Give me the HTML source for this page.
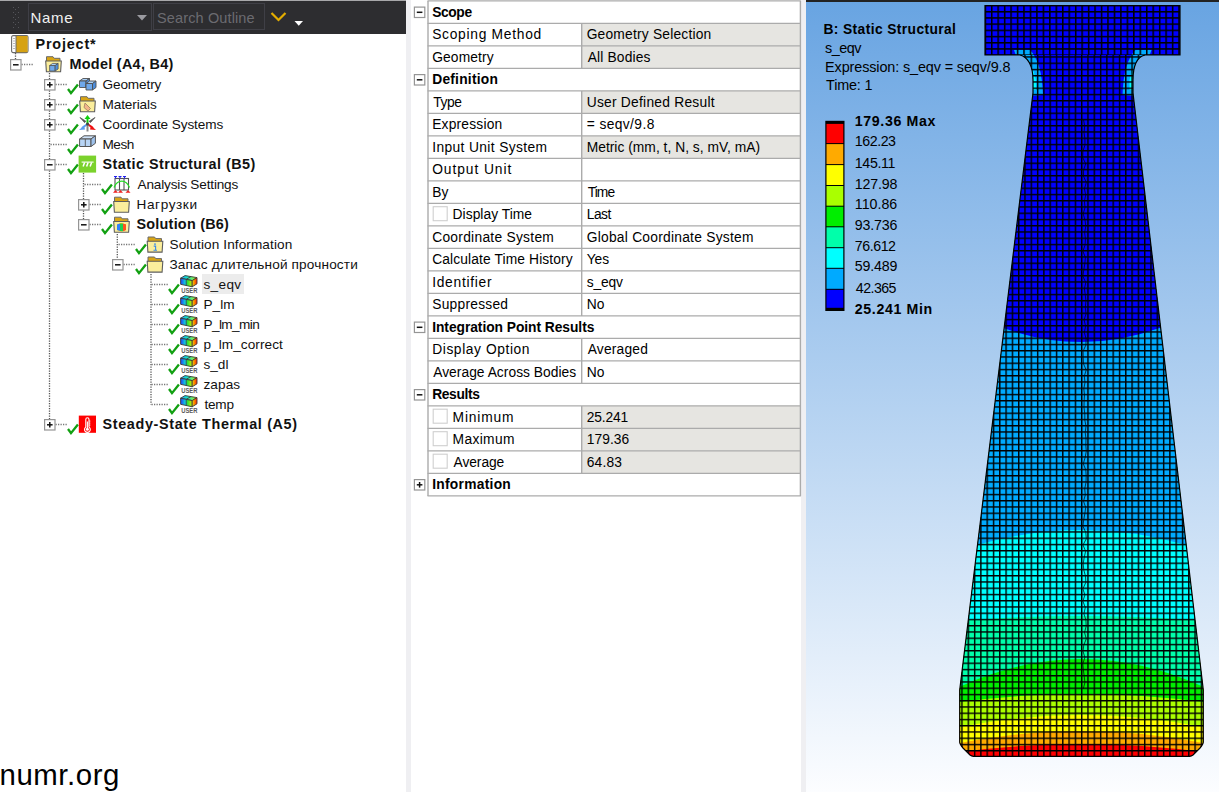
<!DOCTYPE html><html><head><meta charset="utf-8"><style>
*{margin:0;padding:0;box-sizing:border-box}
html,body{width:1219px;height:792px;overflow:hidden;background:#fff;font-family:"Liberation Sans",sans-serif}
body{position:relative}
.a{position:absolute}
.t{position:absolute;white-space:nowrap;line-height:50px}
svg{overflow:visible}
</style></head><body>
<div class="a" style="left:0;top:0;width:406px;height:1px;background:#a8a8aa"></div>
<div class="a" style="left:0;top:1px;width:406px;height:33px;background:#2d2d30"></div>
<svg class="a" style="left:0;top:0" width="30" height="34"><rect x="13" y="7" width="1" height="1" fill="#55555a"/><rect x="18" y="7" width="1" height="1" fill="#55555a"/><rect x="15" y="9" width="1" height="1" fill="#55555a"/><rect x="13" y="12" width="1" height="1" fill="#55555a"/><rect x="18" y="12" width="1" height="1" fill="#55555a"/><rect x="15" y="14" width="1" height="1" fill="#55555a"/><rect x="13" y="17" width="1" height="1" fill="#55555a"/><rect x="18" y="17" width="1" height="1" fill="#55555a"/><rect x="15" y="19" width="1" height="1" fill="#55555a"/><rect x="13" y="22" width="1" height="1" fill="#55555a"/><rect x="18" y="22" width="1" height="1" fill="#55555a"/><rect x="15" y="24" width="1" height="1" fill="#55555a"/><rect x="13" y="27" width="1" height="1" fill="#55555a"/><rect x="18" y="27" width="1" height="1" fill="#55555a"/></svg>
<div class="a" style="left:28px;top:3px;width:124px;height:28px;border:1px solid #3f3f46;background:#2d2d30"></div>
<div class="a" style="left:153px;top:3px;width:112px;height:27px;border:1px solid #3f3f46;background:#2d2d30"></div>
<svg class="a" style="left:137px;top:15px" width="11" height="7"><path d="M0 0H10L5 5.5Z" fill="#9a9aa0"/></svg>
<svg class="a" style="left:270px;top:11px" width="18" height="12"><path d="M1.5 2L8.5 9L15.5 2" fill="none" stroke="#e3ad00" stroke-width="2.2"/></svg>
<svg class="a" style="left:294px;top:20px" width="10" height="7"><path d="M0.5 1H9L4.75 5.8Z" fill="#fff"/></svg>
<div class="a" style="left:406px;top:0;width:5px;height:792px;background:#efeff2"></div>
<div class="a" style="left:801px;top:0;width:5px;height:792px;background:#efeff2"></div>
<div class="a" style="left:202px;top:274px;width:42px;height:20px;background:#ececec"></div>
<svg class="a" style="left:0;top:0" width="406" height="450"><defs><linearGradient id="uf" x1="0" x2="1" y1="0" y2="0"><stop offset="0" stop-color="#1e3ef0"/><stop offset="0.45" stop-color="#10e0e0"/><stop offset="0.6" stop-color="#30e030"/><stop offset="1" stop-color="#d8f000"/></linearGradient><linearGradient id="us" x1="0" x2="1" y1="0" y2="0"><stop offset="0" stop-color="#f0e000"/><stop offset="1" stop-color="#ff2000"/></linearGradient><linearGradient id="ut" x1="0" x2="1" y1="0" y2="0"><stop offset="0" stop-color="#2090f0"/><stop offset="0.4" stop-color="#10e8d0"/><stop offset="1" stop-color="#c0f000"/></linearGradient></defs><path d="M15.5 53V59" stroke="#555" stroke-width="1.3" stroke-dasharray="1.25 1.25"/><path d="M49.5 73V419" stroke="#555" stroke-width="1.3" stroke-dasharray="1.25 1.25"/><path d="M83.5 173V219" stroke="#555" stroke-width="1.3" stroke-dasharray="1.25 1.25"/><path d="M117.3 234V259" stroke="#555" stroke-width="1.3" stroke-dasharray="1.25 1.25"/><path d="M151 274V404.5" stroke="#555" stroke-width="1.3" stroke-dasharray="1.25 1.25"/><path d="M21.5 64.5H34" stroke="#777" stroke-width="1.3" stroke-dasharray="1.25 1.25"/><path d="M55.5 84.5H68" stroke="#777" stroke-width="1.3" stroke-dasharray="1.25 1.25"/><path d="M55.5 104.5H68" stroke="#777" stroke-width="1.3" stroke-dasharray="1.25 1.25"/><path d="M55.5 124.5H68" stroke="#777" stroke-width="1.3" stroke-dasharray="1.25 1.25"/><path d="M50.5 144.5H68" stroke="#777" stroke-width="1.3" stroke-dasharray="1.25 1.25"/><path d="M55.5 164.5H68" stroke="#777" stroke-width="1.3" stroke-dasharray="1.25 1.25"/><path d="M84.5 184.5H102" stroke="#777" stroke-width="1.3" stroke-dasharray="1.25 1.25"/><path d="M89.5 204.5H102" stroke="#777" stroke-width="1.3" stroke-dasharray="1.25 1.25"/><path d="M89.5 224.5H102" stroke="#777" stroke-width="1.3" stroke-dasharray="1.25 1.25"/><path d="M118.5 244.5H136" stroke="#777" stroke-width="1.3" stroke-dasharray="1.25 1.25"/><path d="M123.5 264.5H136" stroke="#777" stroke-width="1.3" stroke-dasharray="1.25 1.25"/><path d="M151.5 284.5H169" stroke="#777" stroke-width="1.3" stroke-dasharray="1.25 1.25"/><path d="M151.5 304.5H169" stroke="#777" stroke-width="1.3" stroke-dasharray="1.25 1.25"/><path d="M151.5 324.5H169" stroke="#777" stroke-width="1.3" stroke-dasharray="1.25 1.25"/><path d="M151.5 344.5H169" stroke="#777" stroke-width="1.3" stroke-dasharray="1.25 1.25"/><path d="M151.5 364.5H169" stroke="#777" stroke-width="1.3" stroke-dasharray="1.25 1.25"/><path d="M151.5 384.5H169" stroke="#777" stroke-width="1.3" stroke-dasharray="1.25 1.25"/><path d="M151.5 404.5H169" stroke="#777" stroke-width="1.3" stroke-dasharray="1.25 1.25"/><path d="M55.5 424.5H68" stroke="#777" stroke-width="1.3" stroke-dasharray="1.25 1.25"/><rect x="10.6" y="59.6" width="10.4" height="10.4" fill="#fff" stroke="#959595" stroke-width="1.2"/><path d="M13 64.8H18.6" stroke="#111" stroke-width="1.5"/><rect x="44.6" y="79.6" width="10.4" height="10.4" fill="#fff" stroke="#959595" stroke-width="1.2"/><path d="M47 84.8H52.6" stroke="#111" stroke-width="1.5"/><path d="M49.8 82V87.6" stroke="#111" stroke-width="1.5"/><path d="M68.0 89 L71.0 93.2 L77.9 84.5" fill="none" stroke="#12a012" stroke-width="2.3" stroke-linejoin="miter" stroke-linecap="butt"/><rect x="44.6" y="99.6" width="10.4" height="10.4" fill="#fff" stroke="#959595" stroke-width="1.2"/><path d="M47 104.8H52.6" stroke="#111" stroke-width="1.5"/><path d="M49.8 102V107.6" stroke="#111" stroke-width="1.5"/><path d="M68.0 109 L71.0 113.2 L77.9 104.5" fill="none" stroke="#12a012" stroke-width="2.3" stroke-linejoin="miter" stroke-linecap="butt"/><rect x="44.6" y="119.6" width="10.4" height="10.4" fill="#fff" stroke="#959595" stroke-width="1.2"/><path d="M47 124.8H52.6" stroke="#111" stroke-width="1.5"/><path d="M49.8 122V127.6" stroke="#111" stroke-width="1.5"/><path d="M68.0 129 L71.0 133.2 L77.9 124.5" fill="none" stroke="#12a012" stroke-width="2.3" stroke-linejoin="miter" stroke-linecap="butt"/><path d="M68.0 149 L71.0 153.2 L77.9 144.5" fill="none" stroke="#12a012" stroke-width="2.3" stroke-linejoin="miter" stroke-linecap="butt"/><rect x="44.6" y="159.6" width="10.4" height="10.4" fill="#fff" stroke="#959595" stroke-width="1.2"/><path d="M47 164.8H52.6" stroke="#111" stroke-width="1.5"/><path d="M68.0 169 L71.0 173.2 L77.9 164.5" fill="none" stroke="#12a012" stroke-width="2.3" stroke-linejoin="miter" stroke-linecap="butt"/><path d="M102.0 189 L105.0 193.2 L111.9 184.5" fill="none" stroke="#12a012" stroke-width="2.3" stroke-linejoin="miter" stroke-linecap="butt"/><rect x="78.6" y="199.6" width="10.4" height="10.4" fill="#fff" stroke="#959595" stroke-width="1.2"/><path d="M81 204.8H86.6" stroke="#111" stroke-width="1.5"/><path d="M83.8 202V207.6" stroke="#111" stroke-width="1.5"/><path d="M102.0 209 L105.0 213.2 L111.9 204.5" fill="none" stroke="#12a012" stroke-width="2.3" stroke-linejoin="miter" stroke-linecap="butt"/><rect x="78.6" y="219.6" width="10.4" height="10.4" fill="#fff" stroke="#959595" stroke-width="1.2"/><path d="M81 224.8H86.6" stroke="#111" stroke-width="1.5"/><path d="M102.0 229 L105.0 233.2 L111.9 224.5" fill="none" stroke="#12a012" stroke-width="2.3" stroke-linejoin="miter" stroke-linecap="butt"/><path d="M136.0 249 L139.0 253.2 L145.89999999999998 244.5" fill="none" stroke="#12a012" stroke-width="2.3" stroke-linejoin="miter" stroke-linecap="butt"/><rect x="112.6" y="259.6" width="10.4" height="10.4" fill="#fff" stroke="#959595" stroke-width="1.2"/><path d="M115 264.8H120.6" stroke="#111" stroke-width="1.5"/><path d="M136.0 269 L139.0 273.2 L145.89999999999998 264.5" fill="none" stroke="#12a012" stroke-width="2.3" stroke-linejoin="miter" stroke-linecap="butt"/><path d="M169.0 289 L172.0 293.2 L178.89999999999998 284.5" fill="none" stroke="#12a012" stroke-width="2.3" stroke-linejoin="miter" stroke-linecap="butt"/><path d="M169.0 309 L172.0 313.2 L178.89999999999998 304.5" fill="none" stroke="#12a012" stroke-width="2.3" stroke-linejoin="miter" stroke-linecap="butt"/><path d="M169.0 329 L172.0 333.2 L178.89999999999998 324.5" fill="none" stroke="#12a012" stroke-width="2.3" stroke-linejoin="miter" stroke-linecap="butt"/><path d="M169.0 349 L172.0 353.2 L178.89999999999998 344.5" fill="none" stroke="#12a012" stroke-width="2.3" stroke-linejoin="miter" stroke-linecap="butt"/><path d="M169.0 369 L172.0 373.2 L178.89999999999998 364.5" fill="none" stroke="#12a012" stroke-width="2.3" stroke-linejoin="miter" stroke-linecap="butt"/><path d="M169.0 389 L172.0 393.2 L178.89999999999998 384.5" fill="none" stroke="#12a012" stroke-width="2.3" stroke-linejoin="miter" stroke-linecap="butt"/><path d="M169.0 409 L172.0 413.2 L178.89999999999998 404.5" fill="none" stroke="#12a012" stroke-width="2.3" stroke-linejoin="miter" stroke-linecap="butt"/><rect x="44.6" y="419.6" width="10.4" height="10.4" fill="#fff" stroke="#959595" stroke-width="1.2"/><path d="M47 424.8H52.6" stroke="#111" stroke-width="1.5"/><path d="M49.8 422V427.6" stroke="#111" stroke-width="1.5"/><path d="M68.0 429 L71.0 433.2 L77.9 424.5" fill="none" stroke="#12a012" stroke-width="2.3" stroke-linejoin="miter" stroke-linecap="butt"/><g transform="translate(11,35)"><rect x="0.6" y="0.6" width="16.4" height="17" rx="1.5" fill="#fff" stroke="#6a6a6a" stroke-width="1.1"/><rect x="5" y="1" width="11.6" height="16.2" fill="#d6a213"/><path d="M5 1V17.5" stroke="#6a6a6a" stroke-width="1"/><path d="M2 3.5h2M2 6h2M2 8.5h2M2 11h2M2 13.5h2" stroke="#b0b0b0" stroke-width="0.9"/></g><g transform="translate(45,55.5)"><path d="M1.5 1.2H8L9.2 2.8H15V7H1.5Z" fill="#d9a514" stroke="#6a6a6a" stroke-width="1"/><path d="M0.7 5.5H16.3L15.6 16.3H1.4Z" fill="#fbee9c" stroke="#5e5e5e" stroke-width="1.1"/><g transform="translate(4.2,7.5) scale(0.85)"><path d="M0.5 3L4 0.5H10.5L7 3Z" fill="#a9d0f7" stroke="#505050" stroke-width="0.9"/><path d="M0.5 3H7V9.5H0.5Z" fill="#6fa8ea" stroke="#505050" stroke-width="0.9"/><path d="M7 3L10.5 0.5V7L7 9.5Z" fill="#4d8edc" stroke="#505050" stroke-width="0.9"/></g></g><g transform="translate(79,78) scale(1.0)"><path d="M0.5 3L4 0.5H10.5L7 3Z" fill="#a9d0f7" stroke="#505050" stroke-width="0.9"/><path d="M0.5 3H7V9.5H0.5Z" fill="#6fa8ea" stroke="#505050" stroke-width="0.9"/><path d="M7 3L10.5 0.5V7L7 9.5Z" fill="#4d8edc" stroke="#505050" stroke-width="0.9"/></g><g transform="translate(85.5,80.5) scale(1.0)"><path d="M0.5 3L4 0.5H10.5L7 3Z" fill="#a9d0f7" stroke="#505050" stroke-width="0.9"/><path d="M0.5 3H7V9.5H0.5Z" fill="#6fa8ea" stroke="#505050" stroke-width="0.9"/><path d="M7 3L10.5 0.5V7L7 9.5Z" fill="#4d8edc" stroke="#505050" stroke-width="0.9"/></g><g transform="translate(79,95.5)"><path d="M1.5 1.2H8L9.2 2.8H15V7H1.5Z" fill="#d9a514" stroke="#6a6a6a" stroke-width="1"/><path d="M0.7 5.5H16.3L15.6 16.3H1.4Z" fill="#fbee9c" stroke="#5e5e5e" stroke-width="1.1"/><path d="M6 7.5L11.5 13L9 15.5L5 12Z" fill="#f2b48a" stroke="#9a8060" stroke-width="0.8"/></g><g transform="translate(79,115)"><path d="M8.5 9V3" stroke="#10d010" stroke-width="2"/><path d="M5.5 4L8.5 0L11.5 4Z" fill="#10d010"/><path d="M8.5 9L14 13" stroke="#ee1010" stroke-width="2"/><path d="M12 10.5L17 15L11 14.5Z" fill="#ee1010"/><path d="M8.5 9L3 13" stroke="#5a9af0" stroke-width="2"/><path d="M5 10.5L0 15L6 14.5Z" fill="#5a9af0"/><path d="M1 2.5L6.8 6.2L5.6 7.6Z M16 2.5L10.2 6.2L11.4 7.6Z" fill="#555" stroke="#555" stroke-width="0.8"/><path d="M8.5 9V16.5" stroke="#888" stroke-width="2"/><circle cx="8.5" cy="9" r="1.5" fill="#444"/></g><g transform="translate(79,135)"><path d="M0.6 4L5 0.8H16.4L12 4Z" fill="#cfe3fa" stroke="#555" stroke-width="1"/><path d="M0.6 4H12V11.5H0.6Z" fill="#b7d4f5" stroke="#555" stroke-width="1"/><path d="M12 4L16.4 0.8V8.3L12 11.5Z" fill="#9fc2ec" stroke="#555" stroke-width="1"/><path d="M6.3 4V11.5M10.7 2.4L10.7 2.4" stroke="#555" stroke-width="0.9"/></g><g transform="translate(78.6,155.6)"><rect width="17.5" height="17" fill="#7bd22c"/><path d="M3 6.5H15" stroke="#fff" stroke-width="1.1"/><path d="M6 7L4.5 11M9.5 7L8 11M13 7L11.5 11" stroke="#fff" stroke-width="1.5"/></g><g transform="translate(112.5,175.5)"><rect x="2.5" y="3" width="13.5" height="11.5" fill="none" stroke="#555" stroke-width="1.1"/><path d="M7 3V14.5M11.5 3V14.5" stroke="#555" stroke-width="1.1"/><path d="M1.5 12C5 3.5 13.5 3.5 17 12" fill="none" stroke="#22dd22" stroke-width="1.3"/><path d="M1.5 1H4.5M6 1H9M10.5 1H13.5M3 1V3M7.5 1V3M12 1V3" stroke="#2222ee" stroke-width="1.2"/><path d="M0.5 17.3L3 14.5L5.5 17.3ZM5.5 17.3L8 14.5L10.5 17.3ZM13 17.3L15.5 14.5L18 17.3Z" fill="#ee2222"/></g><g transform="translate(113,196)"><path d="M1.5 1.2H8L9.2 2.8H15V7H1.5Z" fill="#d9a514" stroke="#6a6a6a" stroke-width="1"/><path d="M0.7 5.5H16.3L15.6 16.3H1.4Z" fill="#fbee9c" stroke="#5e5e5e" stroke-width="1.1"/></g><g transform="translate(113,216)"><path d="M1.5 1.2H8L9.2 2.8H15V7H1.5Z" fill="#d9a514" stroke="#6a6a6a" stroke-width="1"/><path d="M0.7 5.5H16.3L15.6 16.3H1.4Z" fill="#fbee9c" stroke="#5e5e5e" stroke-width="1.1"/><path d="M4 8.5L8 7L13 8.5V14L8 15.5L4 14Z" fill="#ffb000"/><path d="M4 8.5L7 7.5V15L4 14Z" fill="#3080ff"/><path d="M7 7.5L10 7.5V15.3L7 15Z" fill="#20d050"/><path d="M10 7.5L13 8.5V14L10 15.3Z" fill="#ff5020"/></g><g transform="translate(146.5,235.8)"><path d="M1.5 1.2H8L9.2 2.8H15V7H1.5Z" fill="#d9a514" stroke="#6a6a6a" stroke-width="1"/><path d="M0.7 5.5H16.3L15.6 16.3H1.4Z" fill="#fbee9c" stroke="#5e5e5e" stroke-width="1.1"/><circle cx="8.5" cy="8.3" r="0.9" fill="#3a8ae8"/><path d="M7.2 10.3H9.1V14.2M7 14.4H10.5" fill="none" stroke="#3a8ae8" stroke-width="1.1"/></g><g transform="translate(146.5,255.8)"><path d="M1.5 1.2H8L9.2 2.8H15V7H1.5Z" fill="#d9a514" stroke="#6a6a6a" stroke-width="1"/><path d="M0.7 5.5H16.3L15.6 16.3H1.4Z" fill="#fbee9c" stroke="#5e5e5e" stroke-width="1.1"/></g><g transform="translate(180,275)"><path d="M0.6 3.2L5 0.6L17 2.6L12.2 5.6Z" fill="url(#ut)" stroke="#3a3a3a" stroke-width="0.9" stroke-linejoin="round"/><path d="M0.6 3.2L12.2 5.6V11.8L0.6 9.3Z" fill="url(#uf)" stroke="#3a3a3a" stroke-width="0.9" stroke-linejoin="round"/><path d="M12.2 5.6L17 2.6V8.8L12.2 11.8Z" fill="url(#us)" stroke="#3a3a3a" stroke-width="0.9" stroke-linejoin="round"/><path d="M6.2 4.3V10.6M6.2 4.3L10.9 1.6" stroke="#3a3a3a" stroke-width="0.9"/><text x="1.2" y="18" font-family="Liberation Sans" font-weight="bold" font-size="6.6" fill="#5a5a5a" textLength="16.3" lengthAdjust="spacingAndGlyphs">USER</text></g><g transform="translate(180,295)"><path d="M0.6 3.2L5 0.6L17 2.6L12.2 5.6Z" fill="url(#ut)" stroke="#3a3a3a" stroke-width="0.9" stroke-linejoin="round"/><path d="M0.6 3.2L12.2 5.6V11.8L0.6 9.3Z" fill="url(#uf)" stroke="#3a3a3a" stroke-width="0.9" stroke-linejoin="round"/><path d="M12.2 5.6L17 2.6V8.8L12.2 11.8Z" fill="url(#us)" stroke="#3a3a3a" stroke-width="0.9" stroke-linejoin="round"/><path d="M6.2 4.3V10.6M6.2 4.3L10.9 1.6" stroke="#3a3a3a" stroke-width="0.9"/><text x="1.2" y="18" font-family="Liberation Sans" font-weight="bold" font-size="6.6" fill="#5a5a5a" textLength="16.3" lengthAdjust="spacingAndGlyphs">USER</text></g><g transform="translate(180,315)"><path d="M0.6 3.2L5 0.6L17 2.6L12.2 5.6Z" fill="url(#ut)" stroke="#3a3a3a" stroke-width="0.9" stroke-linejoin="round"/><path d="M0.6 3.2L12.2 5.6V11.8L0.6 9.3Z" fill="url(#uf)" stroke="#3a3a3a" stroke-width="0.9" stroke-linejoin="round"/><path d="M12.2 5.6L17 2.6V8.8L12.2 11.8Z" fill="url(#us)" stroke="#3a3a3a" stroke-width="0.9" stroke-linejoin="round"/><path d="M6.2 4.3V10.6M6.2 4.3L10.9 1.6" stroke="#3a3a3a" stroke-width="0.9"/><text x="1.2" y="18" font-family="Liberation Sans" font-weight="bold" font-size="6.6" fill="#5a5a5a" textLength="16.3" lengthAdjust="spacingAndGlyphs">USER</text></g><g transform="translate(180,335)"><path d="M0.6 3.2L5 0.6L17 2.6L12.2 5.6Z" fill="url(#ut)" stroke="#3a3a3a" stroke-width="0.9" stroke-linejoin="round"/><path d="M0.6 3.2L12.2 5.6V11.8L0.6 9.3Z" fill="url(#uf)" stroke="#3a3a3a" stroke-width="0.9" stroke-linejoin="round"/><path d="M12.2 5.6L17 2.6V8.8L12.2 11.8Z" fill="url(#us)" stroke="#3a3a3a" stroke-width="0.9" stroke-linejoin="round"/><path d="M6.2 4.3V10.6M6.2 4.3L10.9 1.6" stroke="#3a3a3a" stroke-width="0.9"/><text x="1.2" y="18" font-family="Liberation Sans" font-weight="bold" font-size="6.6" fill="#5a5a5a" textLength="16.3" lengthAdjust="spacingAndGlyphs">USER</text></g><g transform="translate(180,355)"><path d="M0.6 3.2L5 0.6L17 2.6L12.2 5.6Z" fill="url(#ut)" stroke="#3a3a3a" stroke-width="0.9" stroke-linejoin="round"/><path d="M0.6 3.2L12.2 5.6V11.8L0.6 9.3Z" fill="url(#uf)" stroke="#3a3a3a" stroke-width="0.9" stroke-linejoin="round"/><path d="M12.2 5.6L17 2.6V8.8L12.2 11.8Z" fill="url(#us)" stroke="#3a3a3a" stroke-width="0.9" stroke-linejoin="round"/><path d="M6.2 4.3V10.6M6.2 4.3L10.9 1.6" stroke="#3a3a3a" stroke-width="0.9"/><text x="1.2" y="18" font-family="Liberation Sans" font-weight="bold" font-size="6.6" fill="#5a5a5a" textLength="16.3" lengthAdjust="spacingAndGlyphs">USER</text></g><g transform="translate(180,375)"><path d="M0.6 3.2L5 0.6L17 2.6L12.2 5.6Z" fill="url(#ut)" stroke="#3a3a3a" stroke-width="0.9" stroke-linejoin="round"/><path d="M0.6 3.2L12.2 5.6V11.8L0.6 9.3Z" fill="url(#uf)" stroke="#3a3a3a" stroke-width="0.9" stroke-linejoin="round"/><path d="M12.2 5.6L17 2.6V8.8L12.2 11.8Z" fill="url(#us)" stroke="#3a3a3a" stroke-width="0.9" stroke-linejoin="round"/><path d="M6.2 4.3V10.6M6.2 4.3L10.9 1.6" stroke="#3a3a3a" stroke-width="0.9"/><text x="1.2" y="18" font-family="Liberation Sans" font-weight="bold" font-size="6.6" fill="#5a5a5a" textLength="16.3" lengthAdjust="spacingAndGlyphs">USER</text></g><g transform="translate(180,395)"><path d="M0.6 3.2L5 0.6L17 2.6L12.2 5.6Z" fill="url(#ut)" stroke="#3a3a3a" stroke-width="0.9" stroke-linejoin="round"/><path d="M0.6 3.2L12.2 5.6V11.8L0.6 9.3Z" fill="url(#uf)" stroke="#3a3a3a" stroke-width="0.9" stroke-linejoin="round"/><path d="M12.2 5.6L17 2.6V8.8L12.2 11.8Z" fill="url(#us)" stroke="#3a3a3a" stroke-width="0.9" stroke-linejoin="round"/><path d="M6.2 4.3V10.6M6.2 4.3L10.9 1.6" stroke="#3a3a3a" stroke-width="0.9"/><text x="1.2" y="18" font-family="Liberation Sans" font-weight="bold" font-size="6.6" fill="#5a5a5a" textLength="16.3" lengthAdjust="spacingAndGlyphs">USER</text></g><g transform="translate(78.8,415.6)"><rect width="17.2" height="17.2" fill="#f00"/><path d="M7 11.5V3.8A1.6 1.6 0 0 1 10.2 3.8V11.5A2.9 2.9 0 1 1 7 11.5Z" fill="none" stroke="#fff" stroke-width="1.1"/><path d="M8.6 6V13" stroke="#fff" stroke-width="1.1"/><circle cx="8.6" cy="13.6" r="1.5" fill="#fff"/><path d="M10.2 5.5H11.6M10.2 7.5H11.6M10.2 9.5H11.6" stroke="#fff" stroke-width="0.8"/></g></svg>
<svg class="a" style="left:0;top:0" width="806" height="500"><rect x="428" y="0.9" width="372.4" height="495.0" fill="#fff"/><rect x="581.7" y="23.4" width="218.69999999999993" height="22.5" fill="#e6e5e1"/><rect x="581.7" y="45.9" width="218.69999999999993" height="22.5" fill="#e6e5e1"/><rect x="581.7" y="90.9" width="218.69999999999993" height="22.5" fill="#e6e5e1"/><rect x="581.7" y="135.9" width="218.69999999999993" height="22.5" fill="#e6e5e1"/><rect x="581.7" y="405.9" width="218.69999999999993" height="22.5" fill="#e6e5e1"/><rect x="581.7" y="428.4" width="218.69999999999993" height="22.5" fill="#e6e5e1"/><rect x="581.7" y="450.9" width="218.69999999999993" height="22.5" fill="#e6e5e1"/><path d="M427.5 0.90H800.9" stroke="#ababab" stroke-width="1.4"/><path d="M427.5 23.40H800.9" stroke="#ababab" stroke-width="1.4"/><path d="M427.5 45.90H800.9" stroke="#ababab" stroke-width="1.4"/><path d="M427.5 68.40H800.9" stroke="#ababab" stroke-width="1.4"/><path d="M427.5 90.90H800.9" stroke="#ababab" stroke-width="1.4"/><path d="M427.5 113.40H800.9" stroke="#ababab" stroke-width="1.4"/><path d="M427.5 135.90H800.9" stroke="#ababab" stroke-width="1.4"/><path d="M427.5 158.40H800.9" stroke="#ababab" stroke-width="1.4"/><path d="M427.5 180.90H800.9" stroke="#ababab" stroke-width="1.4"/><path d="M427.5 203.40H800.9" stroke="#ababab" stroke-width="1.4"/><path d="M427.5 225.90H800.9" stroke="#ababab" stroke-width="1.4"/><path d="M427.5 248.40H800.9" stroke="#ababab" stroke-width="1.4"/><path d="M427.5 270.90H800.9" stroke="#ababab" stroke-width="1.4"/><path d="M427.5 293.40H800.9" stroke="#ababab" stroke-width="1.4"/><path d="M427.5 315.90H800.9" stroke="#ababab" stroke-width="1.4"/><path d="M427.5 338.40H800.9" stroke="#ababab" stroke-width="1.4"/><path d="M427.5 360.90H800.9" stroke="#ababab" stroke-width="1.4"/><path d="M427.5 383.40H800.9" stroke="#ababab" stroke-width="1.4"/><path d="M427.5 405.90H800.9" stroke="#ababab" stroke-width="1.4"/><path d="M427.5 428.40H800.9" stroke="#ababab" stroke-width="1.4"/><path d="M427.5 450.90H800.9" stroke="#ababab" stroke-width="1.4"/><path d="M427.5 473.40H800.9" stroke="#ababab" stroke-width="1.4"/><path d="M427.5 495.90H800.9" stroke="#ababab" stroke-width="1.4"/><path d="M428 0.9V495.9" stroke="#ababab" stroke-width="1.4"/><path d="M800.4 0.9V495.9" stroke="#ababab" stroke-width="1.4"/><path d="M581.7 23.40V45.90" stroke="#ababab" stroke-width="1.4"/><path d="M581.7 45.90V68.40" stroke="#ababab" stroke-width="1.4"/><path d="M581.7 90.90V113.40" stroke="#ababab" stroke-width="1.4"/><path d="M581.7 113.40V135.90" stroke="#ababab" stroke-width="1.4"/><path d="M581.7 135.90V158.40" stroke="#ababab" stroke-width="1.4"/><path d="M581.7 158.40V180.90" stroke="#ababab" stroke-width="1.4"/><path d="M581.7 180.90V203.40" stroke="#ababab" stroke-width="1.4"/><path d="M581.7 203.40V225.90" stroke="#ababab" stroke-width="1.4"/><path d="M581.7 225.90V248.40" stroke="#ababab" stroke-width="1.4"/><path d="M581.7 248.40V270.90" stroke="#ababab" stroke-width="1.4"/><path d="M581.7 270.90V293.40" stroke="#ababab" stroke-width="1.4"/><path d="M581.7 293.40V315.90" stroke="#ababab" stroke-width="1.4"/><path d="M581.7 338.40V360.90" stroke="#ababab" stroke-width="1.4"/><path d="M581.7 360.90V383.40" stroke="#ababab" stroke-width="1.4"/><path d="M581.7 405.90V428.40" stroke="#ababab" stroke-width="1.4"/><path d="M581.7 428.40V450.90" stroke="#ababab" stroke-width="1.4"/><path d="M581.7 450.90V473.40" stroke="#ababab" stroke-width="1.4"/><rect x="414.4" y="7.10" width="10.4" height="10.4" fill="#fff" stroke="#959595" stroke-width="1.2"/><path d="M416.8 12.30H422.4" stroke="#111" stroke-width="1.5"/><rect x="414.4" y="74.60" width="10.4" height="10.4" fill="#fff" stroke="#959595" stroke-width="1.2"/><path d="M416.8 79.80H422.4" stroke="#111" stroke-width="1.5"/><rect x="433.2" y="206.70" width="14" height="14" fill="#fff" stroke="#cfcfcf" stroke-width="1.1"/><rect x="414.4" y="322.10" width="10.4" height="10.4" fill="#fff" stroke="#959595" stroke-width="1.2"/><path d="M416.8 327.30H422.4" stroke="#111" stroke-width="1.5"/><rect x="414.4" y="389.60" width="10.4" height="10.4" fill="#fff" stroke="#959595" stroke-width="1.2"/><path d="M416.8 394.80H422.4" stroke="#111" stroke-width="1.5"/><rect x="433.2" y="409.20" width="14" height="14" fill="#fff" stroke="#cfcfcf" stroke-width="1.1"/><rect x="433.2" y="431.70" width="14" height="14" fill="#fff" stroke="#cfcfcf" stroke-width="1.1"/><rect x="433.2" y="454.20" width="14" height="14" fill="#fff" stroke="#cfcfcf" stroke-width="1.1"/><rect x="414.4" y="479.60" width="10.4" height="10.4" fill="#fff" stroke="#959595" stroke-width="1.2"/><path d="M416.8 484.80H422.4" stroke="#111" stroke-width="1.5"/><path d="M419.6 482.00V487.60" stroke="#111" stroke-width="1.5"/></svg>
<div class="a" style="left:806px;top:0;width:413px;height:792px;background:linear-gradient(#68a4e2,#fcfdff)"></div>
<div class="a" style="left:806px;top:0;width:413px;height:2px;background:#222"></div>
<svg class="a" style="left:0;top:0" width="1219" height="792"><defs><clipPath id="bc"><path d="M985 5.5H1180V55H1145C1137 57 1133 66 1133 80V93L1203.3 690V742Q1203.3 744 1200 748L1193 755Q1191.5 756.3 1189.5 756.3H973.5Q971.5 756.3 970 755L963 748Q959.7 744 959.7 742V690L1033 93V80C1033 66 1028 57 1020 55H985Z"/></clipPath><pattern id="mb1" x="1035" y="54.5" width="6.6" height="6.6" patternUnits="userSpaceOnUse"><rect width="6.6" height="1.45" fill="#000"/><rect width="1.45" height="6.6" fill="#000"/></pattern><pattern id="mb2" x="1081" y="756.3" width="6.3" height="6.25" patternUnits="userSpaceOnUse"><rect width="6.3" height="1.4" fill="#000"/><rect width="1.4" height="6.25" fill="#000"/></pattern><pattern id="mb3" x="1010" y="1" width="6.2" height="6.2" patternUnits="userSpaceOnUse"><rect width="6.2" height="1.35" fill="#000"/><rect width="1.35" height="6.2" fill="#000"/></pattern><pattern id="mb4" x="959.7" y="756.3" width="6.08" height="6.1" patternUnits="userSpaceOnUse"><rect width="6.08" height="1.35" fill="#000"/><rect width="1.35" height="6.1" fill="#000"/></pattern><pattern id="mf" x="984.5" y="4.8" width="6.46" height="6.2" patternUnits="userSpaceOnUse"><rect width="6.46" height="1.5" fill="#000"/><rect width="1.5" height="6.2" fill="#000"/></pattern></defs><g clip-path="url(#bc)"><rect x="950" y="0" width="269" height="792" fill="#ff0000"/><path d="M940 0H1219V752H1203.0Q1081.5 736 960.0 752H940Z" fill="#ffaa00"/><path d="M940 0H1219V743H1203.0Q1081.5 719 960.0 743H940Z" fill="#ffff00"/><path d="M940 0H1219V727H1203.0Q1081.5 703 960.0 727H940Z" fill="#aaff00"/><path d="M940 0H1219V702H1203.0Q1081.5 686 960.0 702H940Z" fill="#00f000"/><path d="M940 0H1219V686H1201.5Q1081.5 632 961.5 686H940Z" fill="#00ffaa"/><path d="M940 0H1219V620H1194.5Q1081.5 612 968.5 620H940Z" fill="#00ffff"/><path d="M940 0H1219V544H1182.5Q1081.5 516 980.5 544H940Z" fill="#00aaff"/><path d="M940 0H1219V328H1159.5Q1081.5 356 1003.5 328H940Z" fill="#0000ff"/><path d="M1014 50L1030 50Q1042 62 1043 95L1030 96Z" fill="#00aaff"/><path d="M1021 56Q1032 62 1036 80L1036 90L1031 90L1030 70Z" fill="#00ffff"/><path d="M1151.5 50L1135.5 50Q1123.5 62 1122.5 95L1135.5 96Z" fill="#00aaff"/><path d="M1144.5 56Q1133.5 62 1129.5 80L1129.5 90L1134.5 90L1135.5 70Z" fill="#00ffff"/><rect x="950" y="55" width="269" height="710" fill="url(#mb2)"/><path d="M1083.6 120.0 L1084.7 126.2 L1084.0 132.5 L1084.9 138.8 L1085.0 145.0 L1082.9 151.2 L1082.7 157.5 L1085.7 163.8 L1083.6 170.0 L1083.5 176.2 L1086.3 182.5 L1084.4 188.8 L1085.7 195.0 L1084.4 201.2 L1085.0 207.5 L1083.2 213.8 L1085.0 220.0 L1085.8 226.2 L1084.6 232.5 L1085.4 238.8 L1085.1 245.0 L1082.9 251.2 L1085.4 257.5 L1084.8 263.8 L1083.8 270.0 L1082.8 276.2 L1085.8 282.5 L1084.4 288.8 L1085.3 295.0 L1085.9 301.2 L1085.3 307.5 L1086.0 313.8 L1084.1 320.0 L1085.6 326.2 L1084.3 332.5 L1086.1 338.8 L1085.9 345.0 L1083.1 351.2 L1083.2 357.5 L1083.5 363.8 L1086.2 370.0 L1084.3 376.2 L1085.0 382.5 L1083.8 388.8 L1084.5 395.0 L1084.1 401.2 L1084.0 407.5 L1084.8 413.8 L1084.8 420.0 L1086.0 426.2 L1085.2 432.5 L1086.0 438.8 L1085.8 445.0 L1086.3 451.2 L1085.1 457.5 L1083.3 463.8 L1085.8 470.0 L1086.2 476.2 L1086.0 482.5 L1084.7 488.8 L1085.3 495.0 L1083.5 501.2 L1085.7 507.5 L1084.8 513.8 L1083.7 520.0 L1082.9 526.2 L1085.8 532.5 L1086.3 538.8 L1083.0 545.0 L1085.6 551.2 L1084.2 557.5 L1083.2 563.8 L1083.8 570.0 L1085.5 576.2 L1085.8 582.5 L1082.9 588.8 L1084.9 595.0 L1082.9 601.2 L1085.3 607.5 L1083.9 613.8 L1085.9 620.0 L1086.2 626.2 L1084.5 632.5 L1086.3 638.8 L1083.8 645.0 L1083.0 651.2 L1084.9 657.5 L1082.8 663.8 L1083.4 670.0 L1084.2 676.2 L1084.9 682.5 L1083.3 688.8" fill="none" stroke="#000" stroke-width="0.7"/><rect x="985" y="5.5" width="195" height="49.5" fill="url(#mf)"/></g><path d="M985 5.5H1180V55H1145C1137 57 1133 66 1133 80V93L1203.3 690V742Q1203.3 744 1200 748L1193 755Q1191.5 756.3 1189.5 756.3H973.5Q971.5 756.3 970 755L963 748Q959.7 744 959.7 742V690L1033 93V80C1033 66 1028 57 1020 55H985Z" fill="none" stroke="#000" stroke-width="1.2"/></svg><svg class="a" style="left:0;top:0" width="1219" height="792"><rect x="825.3" y="120.8" width="19.2" height="190.2" fill="#000"/><rect x="826.5" y="123.9" width="16.8" height="19.20" fill="#ff0000"/><rect x="826.5" y="144.1" width="16.8" height="20.00" fill="#ffaa00"/><rect x="826.5" y="165.1" width="16.8" height="19.90" fill="#ffff00"/><rect x="826.5" y="186.0" width="16.8" height="19.70" fill="#aaff00"/><rect x="826.5" y="206.7" width="16.8" height="19.60" fill="#00ee00"/><rect x="826.5" y="227.3" width="16.8" height="19.90" fill="#00ffaa"/><rect x="826.5" y="248.2" width="16.8" height="19.60" fill="#00ffff"/><rect x="826.5" y="268.8" width="16.8" height="20.00" fill="#00aaff"/><rect x="826.5" y="289.8" width="16.8" height="18.00" fill="#0000ff"/></svg>
<div class="t" style="left:30.50px;top:-7.00px;font-size:15px;color:#f1f1f1;letter-spacing:0.667px;">Name</div>
<div class="t" style="left:157.00px;top:-7.00px;font-size:14.5px;color:#6b6b70;letter-spacing:0.131px;">Search Outline</div>
<div class="t" style="left:35.50px;top:19.30px;font-size:14.4px;color:#111;font-weight:700;letter-spacing:0.814px;">Project*</div>
<div class="t" style="left:69.50px;top:39.30px;font-size:14.4px;color:#111;font-weight:700;letter-spacing:0.292px;">Model (A4, B4)</div>
<div class="t" style="left:102.50px;top:60.30px;font-size:13.6px;color:#111;letter-spacing:-0.114px;">Geometry</div>
<div class="t" style="left:102.50px;top:80.30px;font-size:13.6px;color:#111;letter-spacing:-0.112px;">Materials</div>
<div class="t" style="left:102.50px;top:100.30px;font-size:13.6px;color:#111;letter-spacing:-0.094px;">Coordinate Systems</div>
<div class="t" style="left:102.50px;top:120.30px;font-size:13.6px;color:#111;letter-spacing:-0.467px;">Mesh</div>
<div class="t" style="left:102.50px;top:139.30px;font-size:14.4px;color:#111;font-weight:700;letter-spacing:0.457px;">Static Structural (B5)</div>
<div class="t" style="left:137.50px;top:160.30px;font-size:13.6px;color:#111;letter-spacing:-0.169px;">Analysis Settings</div>
<div class="t" style="left:136.50px;top:180.30px;font-size:13.6px;color:#111;letter-spacing:0.600px;">Нагрузки</div>
<div class="t" style="left:136.50px;top:199.30px;font-size:14.4px;color:#111;font-weight:700;letter-spacing:0.233px;">Solution (B6)</div>
<div class="t" style="left:169.50px;top:220.30px;font-size:13.6px;color:#111;letter-spacing:0.095px;">Solution Information</div>
<div class="t" style="left:169.50px;top:240.30px;font-size:13.6px;color:#111;letter-spacing:0.160px;">Запас длительной прочности</div>
<div class="t" style="left:203.50px;top:260.30px;font-size:13.6px;color:#111;letter-spacing:0.325px;">s_eqv</div>
<div class="t" style="left:203.50px;top:280.30px;font-size:13.6px;color:#111;">P_lm</div>
<div class="t" style="left:203.50px;top:300.30px;font-size:13.6px;color:#111;letter-spacing:-0.600px;">P_lm_min</div>
<div class="t" style="left:203.50px;top:320.30px;font-size:13.6px;color:#111;letter-spacing:0.064px;">p_lm_correct</div>
<div class="t" style="left:203.50px;top:340.30px;font-size:13.6px;color:#111;">s_dl</div>
<div class="t" style="left:203.50px;top:360.30px;font-size:13.6px;color:#111;letter-spacing:0.075px;">zapas</div>
<div class="t" style="left:204.50px;top:380.30px;font-size:13.6px;color:#111;letter-spacing:-0.233px;">temp</div>
<div class="t" style="left:102.50px;top:399.30px;font-size:14.4px;color:#111;font-weight:700;letter-spacing:0.642px;">Steady-State Thermal (A5)</div>
<div class="t" style="left:432.20px;top:-12.10px;font-size:13.8px;color:#000;font-weight:700;letter-spacing:-0.375px;">Scope</div>
<div class="t" style="left:432.20px;top:10.40px;font-size:13.8px;color:#000;letter-spacing:0.715px;">Scoping Method</div>
<div class="t" style="left:586.70px;top:10.40px;font-size:13.8px;color:#000;letter-spacing:0.200px;">Geometry Selection</div>
<div class="t" style="left:432.20px;top:32.90px;font-size:13.8px;color:#000;letter-spacing:0.129px;">Geometry</div>
<div class="t" style="left:587.70px;top:32.90px;font-size:13.8px;color:#000;letter-spacing:0.156px;">All Bodies</div>
<div class="t" style="left:432.20px;top:55.40px;font-size:13.8px;color:#000;font-weight:700;letter-spacing:0.233px;">Definition</div>
<div class="t" style="left:433.20px;top:77.90px;font-size:13.8px;color:#000;letter-spacing:-0.400px;">Type</div>
<div class="t" style="left:586.70px;top:77.90px;font-size:13.8px;color:#000;letter-spacing:0.244px;">User Defined Result</div>
<div class="t" style="left:432.20px;top:100.40px;font-size:13.8px;color:#000;letter-spacing:0.200px;">Expression</div>
<div class="t" style="left:586.70px;top:100.40px;font-size:13.8px;color:#000;letter-spacing:0.400px;">= seqv/9.8</div>
<div class="t" style="left:432.20px;top:122.90px;font-size:13.8px;color:#000;letter-spacing:0.375px;">Input Unit System</div>
<div class="t" style="left:586.70px;top:122.90px;font-size:13.8px;color:#000;letter-spacing:0.022px;">Metric (mm, t, N, s, mV, mA)</div>
<div class="t" style="left:432.20px;top:145.40px;font-size:13.8px;color:#000;letter-spacing:0.930px;">Output Unit</div>
<div class="t" style="left:432.20px;top:167.90px;font-size:13.8px;color:#000;">By</div>
<div class="t" style="left:587.70px;top:167.90px;font-size:13.8px;color:#000;letter-spacing:-0.900px;">Time</div>
<div class="t" style="left:452.60px;top:190.40px;font-size:13.8px;color:#000;letter-spacing:0.036px;">Display Time</div>
<div class="t" style="left:586.70px;top:190.40px;font-size:13.8px;color:#000;letter-spacing:-0.467px;">Last</div>
<div class="t" style="left:432.20px;top:212.90px;font-size:13.8px;color:#000;letter-spacing:0.269px;">Coordinate System</div>
<div class="t" style="left:586.70px;top:212.90px;font-size:13.8px;color:#000;letter-spacing:0.248px;">Global Coordinate System</div>
<div class="t" style="left:432.20px;top:235.40px;font-size:13.8px;color:#000;letter-spacing:0.119px;">Calculate Time History</div>
<div class="t" style="left:586.70px;top:235.40px;font-size:13.8px;color:#000;">Yes</div>
<div class="t" style="left:432.20px;top:257.90px;font-size:13.8px;color:#000;letter-spacing:0.711px;">Identifier</div>
<div class="t" style="left:586.70px;top:257.90px;font-size:13.8px;color:#000;letter-spacing:-0.125px;">s_eqv</div>
<div class="t" style="left:432.20px;top:280.40px;font-size:13.8px;color:#000;letter-spacing:0.244px;">Suppressed</div>
<div class="t" style="left:586.70px;top:280.40px;font-size:13.8px;color:#000;">No</div>
<div class="t" style="left:432.20px;top:302.90px;font-size:13.8px;color:#000;font-weight:700;letter-spacing:-0.046px;">Integration Point Results</div>
<div class="t" style="left:432.20px;top:325.40px;font-size:13.8px;color:#000;letter-spacing:0.585px;">Display Option</div>
<div class="t" style="left:587.70px;top:325.40px;font-size:13.8px;color:#000;letter-spacing:0.200px;">Averaged</div>
<div class="t" style="left:433.20px;top:347.90px;font-size:13.8px;color:#000;letter-spacing:0.030px;">Average Across Bodies</div>
<div class="t" style="left:586.70px;top:347.90px;font-size:13.8px;color:#000;">No</div>
<div class="t" style="left:432.20px;top:370.40px;font-size:13.8px;color:#000;font-weight:700;letter-spacing:-0.367px;">Results</div>
<div class="t" style="left:452.60px;top:392.90px;font-size:13.8px;color:#000;letter-spacing:0.833px;">Minimum</div>
<div class="t" style="left:586.70px;top:392.90px;font-size:13.8px;color:#000;letter-spacing:-0.120px;">25.241</div>
<div class="t" style="left:452.60px;top:415.40px;font-size:13.8px;color:#000;letter-spacing:0.333px;">Maximum</div>
<div class="t" style="left:586.70px;top:415.40px;font-size:13.8px;color:#000;letter-spacing:0.080px;">179.36</div>
<div class="t" style="left:453.60px;top:437.90px;font-size:13.8px;color:#000;letter-spacing:-0.083px;">Average</div>
<div class="t" style="left:586.70px;top:437.90px;font-size:13.8px;color:#000;letter-spacing:0.200px;">64.83</div>
<div class="t" style="left:432.20px;top:460.40px;font-size:13.8px;color:#000;font-weight:700;letter-spacing:0.270px;">Information</div>
<div class="t" style="left:823.40px;top:4.90px;font-size:13.8px;color:#000;font-weight:700;letter-spacing:0.400px;">B: Static Structural</div>
<div class="t" style="left:825.10px;top:22.70px;font-size:14.4px;color:#000;letter-spacing:-0.500px;">s_eqv</div>
<div class="t" style="left:825.10px;top:41.90px;font-size:14.4px;color:#000;letter-spacing:-0.111px;">Expression: s_eqv = seqv/9.8</div>
<div class="t" style="left:826.10px;top:60.20px;font-size:14.4px;color:#000;letter-spacing:-0.167px;">Time: 1</div>
<div class="t" style="left:854.80px;top:96.40px;font-size:14.2px;color:#000;font-weight:700;letter-spacing:0.622px;">179.36 Max</div>
<div class="t" style="left:854.80px;top:116.30px;font-size:14.2px;color:#000;letter-spacing:-0.440px;">162.23</div>
<div class="t" style="left:854.80px;top:137.60px;font-size:14.2px;color:#000;letter-spacing:-0.340px;">145.11</div>
<div class="t" style="left:854.80px;top:158.80px;font-size:14.2px;color:#000;letter-spacing:-0.180px;">127.98</div>
<div class="t" style="left:854.80px;top:178.70px;font-size:14.2px;color:#000;letter-spacing:0.020px;">110.86</div>
<div class="t" style="left:854.80px;top:199.90px;font-size:14.2px;color:#000;letter-spacing:-0.180px;">93.736</div>
<div class="t" style="left:854.80px;top:220.60px;font-size:14.2px;color:#000;letter-spacing:-0.440px;">76.612</div>
<div class="t" style="left:854.80px;top:241.30px;font-size:14.2px;color:#000;letter-spacing:-0.180px;">59.489</div>
<div class="t" style="left:855.80px;top:262.50px;font-size:14.2px;color:#000;letter-spacing:-0.540px;">42.365</div>
<div class="t" style="left:854.80px;top:283.70px;font-size:14.2px;color:#000;font-weight:700;letter-spacing:0.622px;">25.241 Min</div>
<div class="t" style="left:-0.40px;top:750.00px;font-size:29.4px;color:#000;letter-spacing:0.529px;">numr.org</div>
</body></html>
